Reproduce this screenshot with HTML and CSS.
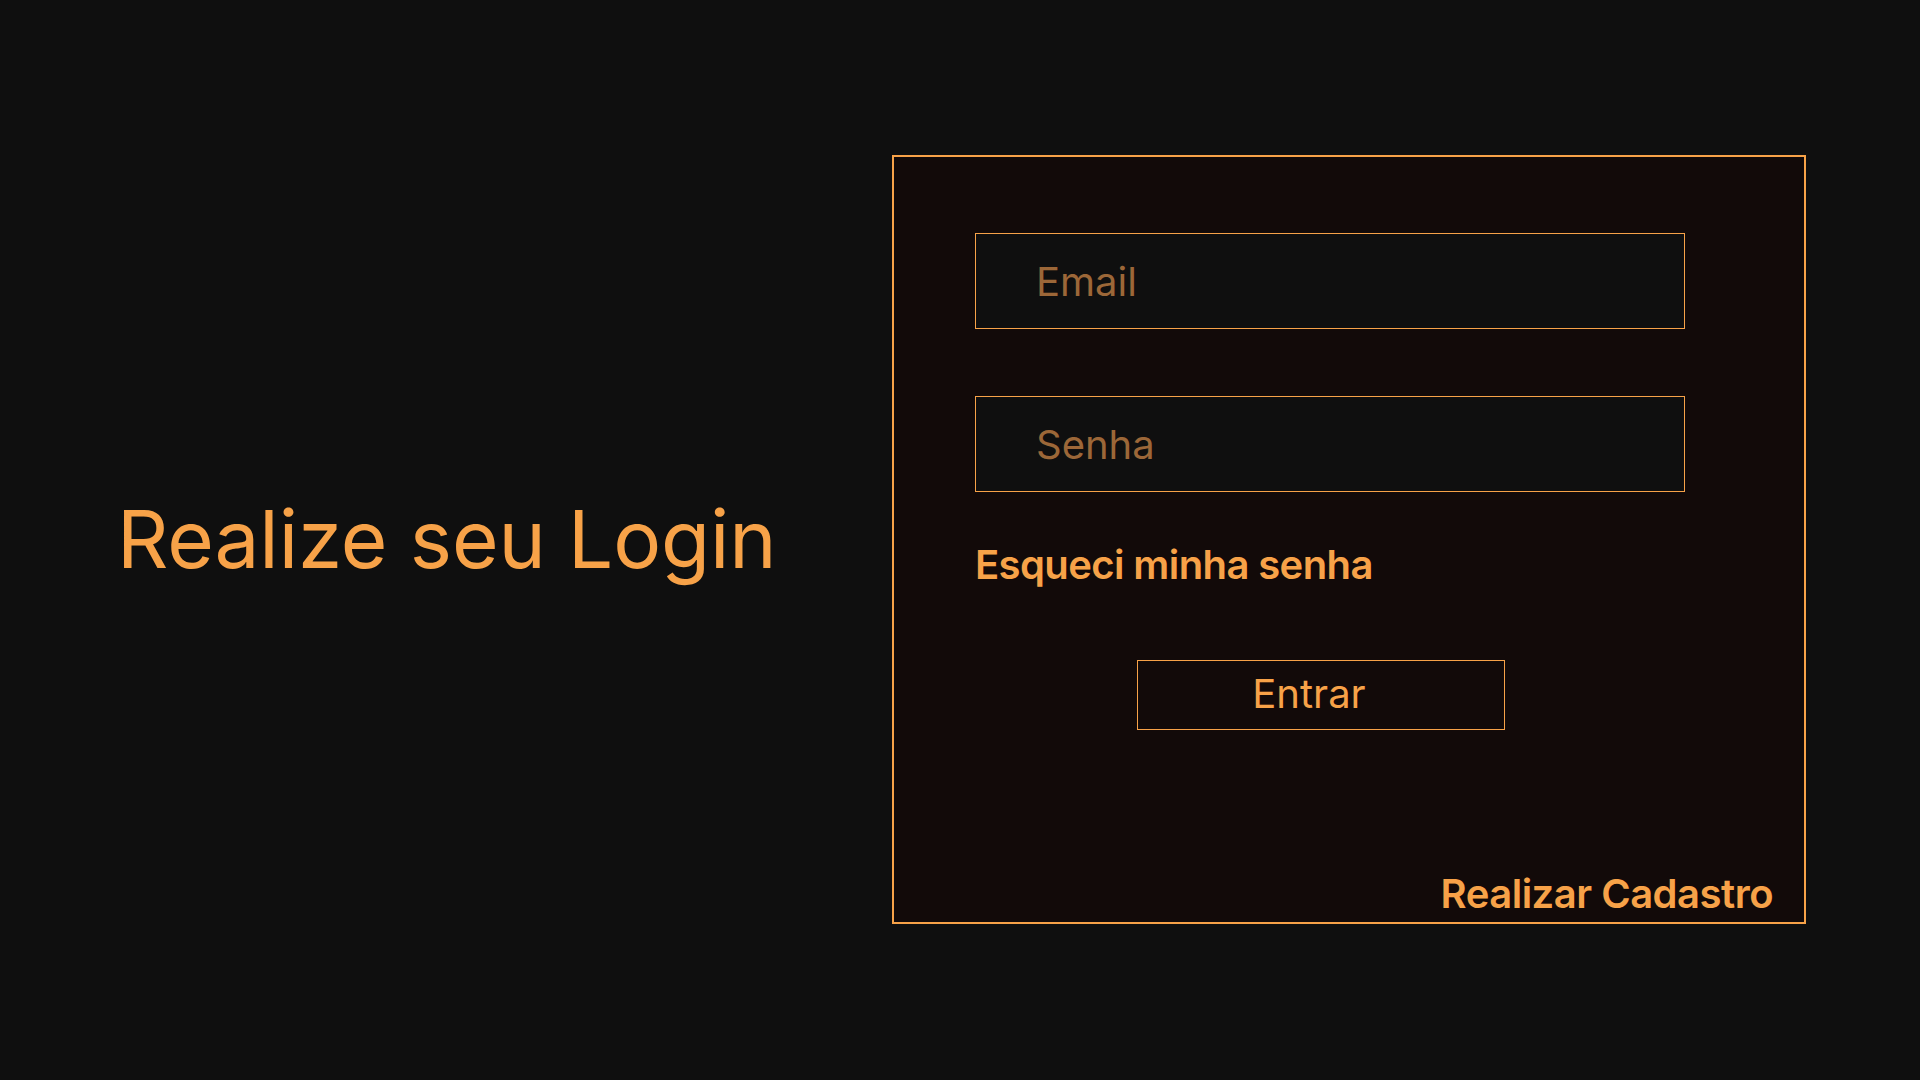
FILE: index.html
```html
<!DOCTYPE html>
<html lang="pt-BR">
<head>
<meta charset="utf-8">
<title>Login</title>
<link rel="stylesheet" href="styles.css">
</head>
<body>
<main class="page">
  <h1 class="title">Realize seu Login</h1>
  <form class="card" onsubmit="return false">
    <input class="field" type="email" placeholder="Email">
    <input class="field field-second" type="password" placeholder="Senha">
    <a class="forgot" href="#">Esqueci minha senha</a>
    <button class="btn" type="submit">Entrar</button>
    <a class="signup" href="#">Realizar Cadastro</a>
  </form>
</main>
</body>
</html>
```
FILE: styles.css
```css
* { box-sizing: border-box; }
html, body { margin: 0; padding: 0; }
body {
  background: #0f0f0f;
  font-family: Inter, "Noto Sans", sans-serif;
  color: #f7a248;
}
.page {
  height: 100vh;
  display: flex;
  align-items: center;
  justify-content: space-between;
  padding: 0 114px 2px 117px;
}
.title {
  margin: 0;
  font-size: 80px;
  font-weight: 400;
  line-height: 1.21;
  letter-spacing: -0.1px;
  color: #f7a248;
}
.card {
  width: 914px;
  height: 769px;
  border: 2px solid #f7a248;
  background: #120a09;
  display: flex;
  flex-direction: column;
  padding: 76px 31px 3px 81px;
}
.field {
  width: 710px;
  height: 96px;
  border: 1px solid #f7a248;
  background: #0f0f0f;
  font-family: Inter, "Noto Sans", sans-serif;
  font-size: 40px;
  color: #f7a248;
  padding: 2px 0 0 60px;
  outline: none;
}
.field::placeholder { color: #9c6738; }
.field-second { margin-top: 67px; }
.forgot {
  margin-top: 49px;
  align-self: flex-start;
  font-size: 40px;
  font-weight: 600;
  line-height: 1.21;
  color: #f7a248;
  text-decoration: none;
  letter-spacing: -0.6px;
}
.btn {
  margin-top: 71px;
  margin-left: 162px;
  align-self: flex-start;
  width: 368px;
  height: 70px;
  border: 1px solid #f7a248;
  background: transparent;
  color: #f7a248;
  font-family: Inter, "Noto Sans", sans-serif;
  font-size: 40px;
  font-weight: 400;
  padding: 0 24px 2px 0;
  cursor: pointer;
}
.signup {
  margin-top: auto;
  align-self: flex-end;
  font-size: 40px;
  font-weight: 600;
  line-height: 1.21;
  color: #f7a248;
  text-decoration: none;
  letter-spacing: -0.5px;
}
```
